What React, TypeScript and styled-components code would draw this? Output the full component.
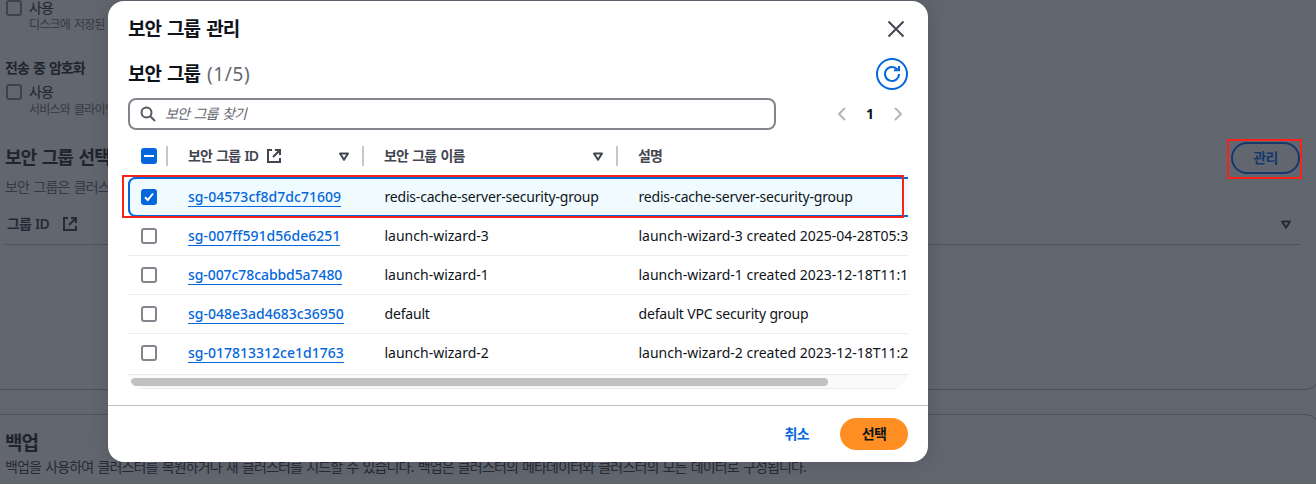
import React from "react";
import styled, { createGlobalStyle } from "styled-components";

const Global = createGlobalStyle`
  * { box-sizing: border-box; }
  body { margin: 0; background: #62666f; overflow: hidden; }
  body, button, input { font-family: "Noto Sans", "Noto Sans CJK KR", sans-serif; }
  h1, h2, h3, p { margin: 0; }
  button { cursor: pointer; margin: 0; padding: 0; }
`;

const Page = styled.div`
  position: relative;
  width: 1316px;
  height: 484px;
  overflow: hidden;
  background: #62666f;
  color: #1f242e;
`;

const Card = styled.section<{ $height: number; $first?: boolean }>`
  height: ${(p) => p.$height}px;
  width: 1341px;
  margin: 0 0 24px -20px;
  padding: ${(p) => (p.$first ? "0 20px 0 24px" : "16px 20px 0 24px")};
  border: 1px solid #4c515b;
  border-top-width: ${(p) => (p.$first ? 0 : 1)}px;
  border-radius: ${(p) => (p.$first ? "0 0 16px 16px" : "16px")};
`;

const Option = styled.div`
  display: flex;
  gap: 7px;
  height: 33px;
  padding-left: 1px;
`;

const OptionText = styled.div`
  display: flex;
  flex-direction: column;
`;

const Txt = styled.span<{ $size?: number; $w?: number; $ls?: number; $ws?: number; $lh?: number; $c?: string }>`
  display: block;
  white-space: nowrap;
  font-size: ${(p) => p.$size ?? 14}px;
  font-weight: ${(p) => p.$w ?? 400};
  letter-spacing: ${(p) => p.$ls ?? 0}px;
  word-spacing: ${(p) => p.$ws ?? 0}px;
  line-height: ${(p) => p.$lh ?? 20}px;
  color: ${(p) => p.$c ?? "inherit"};
`;

const Box = styled.span<{ $tone: "dim" | "plain" | "on" }>`
  display: flex;
  flex: none;
  align-items: center;
  justify-content: center;
  width: 16px;
  height: 16px;
  border-radius: 3px;
  border: 2px solid ${(p) => ({ dim: "#3e424c", plain: "#84848d", on: "#0567dc" })[p.$tone]};
  background: ${(p) => (p.$tone === "on" ? "#0567dc" : "transparent")};
`;

const FieldLabel = styled.div`
  margin: 25px 0 6px;
  height: 20px;
`;

const SectionHead = styled.div`
  display: flex;
  justify-content: space-between;
  height: 32px;
  margin-top: 25px;
`;

const ManageButton = styled.button`
  width: 69px;
  height: 32px;
  border: 2px solid #16396b;
  border-radius: 16px;
  background: transparent;
  color: #16396b;
  display: flex;
  align-items: center;
  justify-content: center;
`;

const GroupHead = styled.div`
  display: flex;
  align-items: center;
  height: 41px;
  margin-top: 4px;
  padding: 0 8px 0 2px;
  border-bottom: 1px solid #4c515b;
  color: #262b36;
  > svg:last-child { margin-left: auto; }
`;

const Modal = styled.div`
  position: absolute;
  left: 108px;
  top: 1px;
  width: 820px;
  height: 461px;
  border-radius: 16px;
  background: #fff;
  color: #0f141a;
  box-shadow: 0 0 20px 1px rgba(0, 7, 22, 0.14);
  display: flex;
  flex-direction: column;
`;

const ModalBody = styled.div`
  flex: 1;
  padding: 0 20px;
`;

const Bar = styled.div<{ $h: number; $top?: number; $pr?: number }>`
  display: flex;
  align-items: center;
  justify-content: space-between;
  height: ${(p) => p.$h}px;
  margin-top: ${(p) => p.$top ?? 0}px;
  padding-right: ${(p) => p.$pr ?? 0}px;
`;

const IconButton = styled.button<{ $ring?: boolean }>`
  display: flex;
  align-items: center;
  justify-content: center;
  width: ${(p) => (p.$ring ? 32 : 24)}px;
  height: ${(p) => (p.$ring ? 32 : 24)}px;
  border: ${(p) => (p.$ring ? "2px solid #0567dc" : "0")};
  border-radius: 50%;
  background: transparent;
`;

const TitleLine = styled.div`
  display: flex;
  gap: 7px;
`;

const Search = styled.div`
  display: flex;
  align-items: center;
  gap: 9px;
  width: 648px;
  height: 32px;
  padding-left: 10px;
  border: 2px solid #84848d;
  border-radius: 8px;
  font-style: italic;
`;

const Pager = styled.div`
  display: flex;
  align-items: center;
  gap: 16px;
`;

const Table = styled.div`
  margin-top: 8px;
  overflow: hidden;
  border-radius: 0 0 16px 16px;
`;

const Row = styled.div<{ $kind: "head" | "selected" | "plain" | "last" }>`
  display: grid;
  grid-template-columns: 40px 196px 254px 310px;
  align-items: center;
  width: 800px;
  height: ${(p) => ({ head: 39, selected: 40, plain: 39, last: 40 })[p.$kind]}px;
  ${(p) =>
    p.$kind === "selected" &&
    `background: #f0fbff; box-shadow: inset 0 2px #0567dc, inset 0 -2px #0567dc, inset 2px 0 #0567dc; border-radius: 8px 0 0 8px;`}
  ${(p) => p.$kind === "plain" && "border-bottom: 1px solid #ebebf0;"}
  ${(p) => p.$kind === "last" && "padding-bottom: 2px;"}
`;

const HeadCell = styled.div<{ $line?: boolean; $pad?: number }>`
  display: flex;
  align-items: center;
  height: 20px;
  margin-top: -3px;
  padding: 0 12px 0 ${(p) => p.$pad ?? 20}px;
  border-right: ${(p) => (p.$line ? "2px solid #c6c6cd" : "0")};
  color: #424650;
  > svg:last-child { margin-left: auto; }
`;

const Cell = styled.div<{ $pad?: number }>`
  display: flex;
  align-items: center;
  min-width: 0;
  padding-left: ${(p) => p.$pad ?? 20.5}px;
`;

const Link = styled.a`
  display: block;
  height: 20px;
  border-bottom: 1px solid #0567dc;
  color: #0567dc;
`;

const ScrollTrack = styled.div`
  height: 15px;
  padding: 3px 0 0 3px;
  border-top: 1px solid #e8e8e8;
  border-bottom: 1px solid #ededed;
  background: #fafafa;
`;

const ScrollThumb = styled.div`
  width: 697px;
  height: 8px;
  border-radius: 4px;
  background: #c1c1c1;
`;

const Footer = styled.div`
  display: flex;
  align-items: center;
  justify-content: flex-end;
  gap: 31px;
  height: 57px;
  padding-right: 20px;
  border-top: 1px solid #c0c0c4;
`;

const TextButton = styled.button`
  border: 0;
  background: transparent;
  color: #0567dc;
`;

const PrimaryButton = styled.button`
  width: 68px;
  height: 32px;
  border: 0;
  border-radius: 16px;
  background: #ff8f22;
  color: #0f141a;
  display: flex;
  align-items: center;
  justify-content: center;
`;

const Highlight = styled.div<{ $x: number; $y: number; $w: number; $h: number }>`
  position: absolute;
  left: ${(p) => p.$x}px;
  top: ${(p) => p.$y}px;
  width: ${(p) => p.$w}px;
  height: ${(p) => p.$h}px;
  border: 2px solid #f9221b;
  pointer-events: none;
`;

const Push = styled.span<{ $l: number }>`
  display: flex;
  margin-left: ${(p) => p.$l}px;
`;

const External = () => (
  <svg width="16" height="16" viewBox="0 0 16 16" fill="none" stroke="currentColor" strokeWidth="2">
    <path d="M9 2h5v5M14 2L7 9M14 10v4H2V2h4" />
  </svg>
);

const Sort = () => (
  <svg width="12" height="12" viewBox="0 0 12 12" fill="none" stroke="currentColor" strokeWidth="2" strokeLinejoin="round">
    <path d="M2 3.5h8L6 9.8z" />
  </svg>
);

const Chevron = ({ right }: { right?: boolean }) => (
  <svg width="16" height="16" viewBox="0 0 16 16" fill="none" stroke="#b4b4bb" strokeWidth="2">
    <path d={right ? "M5 2l6 6-6 6" : "M11 2L5 8l6 6"} />
  </svg>
);

const rows = [
  { id: "sg-04573cf8d7dc71609", idLs: 0.05, name: "redis-cache-server-security-group", desc: "redis-cache-server-security-group", ls: -0.2 },
  { id: "sg-007ff591d56de6251", idLs: 0.05, name: "launch-wizard-3", desc: "launch-wizard-3 created 2025-04-28T05:3", ls: 0 },
  { id: "sg-007c78cabbd5a7480", idLs: -0.08, name: "launch-wizard-1", desc: "launch-wizard-1 created 2023-12-18T11:1", ls: 0 },
  { id: "sg-048e3ad4683c36950", idLs: 0, name: "default", desc: "default VPC security group", ls: -0.18 },
  { id: "sg-017813312ce1d1763", idLs: 0, name: "launch-wizard-2", desc: "launch-wizard-2 created 2023-12-18T11:2", ls: 0 },
];

export default function App() {
  return (
    <Page>
      <Global />
      <Card $first $height={390}>
        <Option>
          <Box $tone="dim" />
          <OptionText>
            <Txt $lh={16} $ls={-0.8}>사용</Txt>
            <Txt $size={12} $ls={-0.75} $ws={1.5} $lh={18} $c="#343944">디스크에 저장된</Txt>
          </OptionText>
        </Option>
        <FieldLabel><Txt $w={700} $ls={-1} $ws={1.5}>전송 중 암호화</Txt></FieldLabel>
        <Option>
          <Box $tone="dim" />
          <OptionText>
            <Txt $lh={16} $ls={-0.8}>사용</Txt>
            <Txt $size={12} $ls={-0.75} $ws={1.5} $lh={19} $c="#343944">서비스와 클라이언트</Txt>
          </OptionText>
        </Option>
        <SectionHead>
          <Txt as="h2" $size={18} $w={700} $ls={-1} $ws={2} $lh={30}>보안 그룹 선택</Txt>
          <ManageButton><Txt $w={600} $ls={-0.6}>관리</Txt></ManageButton>
        </SectionHead>
        <Txt as="p" $ls={-0.85} $ws={1.5} $lh={26} $c="#343944">보안 그룹은 클러스터에</Txt>
        <GroupHead>
          <Txt $w={600} $ls={-0.8} $ws={1}>그룹 ID</Txt>
          <Push $l={13}><External /></Push>
          <Sort />
        </GroupHead>
      </Card>
      <Card $height={100}>
        <Txt as="h2" $size={19} $w={700} $ls={-1} $lh={24}>백업</Txt>
        <Txt as="p" $ls={-0.85} $ws={1.3} $lh={24} $c="#262b36">
          백업을 사용하여 클러스터를 복원하거나 새 클러스터를 시드할 수 있습니다. 백업은 클러스터의 메타데이터와 클러스터의 모든 데이터로 구성됩니다.
        </Txt>
      </Card>

      <Modal role="dialog">
        <ModalBody>
          <Bar $h={26} $top={15}>
            <Txt as="h1" $size={19} $w={700} $ls={-1} $ws={2.2} $lh={24}>보안 그룹 관리</Txt>
            <IconButton aria-label="닫기">
              <svg width="18" height="18" viewBox="0 0 18 18" fill="none" stroke="#424650" strokeWidth="2">
                <path d="M1.5 1.5l15 15M16.5 1.5l-15 15" />
              </svg>
            </IconButton>
          </Bar>
          <Bar $h={32} $top={16}>
            <TitleLine>
              <Txt as="h2" $size={19} $w={700} $ls={-1} $ws={2.2} $lh={24}>보안 그룹</Txt>
              <Txt $size={19} $ls={0.6} $lh={24} $c="#656871">(1/5)</Txt>
            </TitleLine>
            <IconButton $ring aria-label="새로 고침">
              <svg width="18" height="18" viewBox="0 0 18 18" fill="none" stroke="#0567dc" strokeWidth="2">
                <path d="M16 9a7 7 0 1 1-1.6-4.5" />
                <path d="M16 1v4.2h-5" />
              </svg>
            </IconButton>
          </Bar>
          <Bar $h={32} $top={8} $pr={2}>
            <Search>
              <svg width="16" height="16" viewBox="0 0 16 16" fill="none" stroke="#555963" strokeWidth="2">
                <circle cx="6.5" cy="6.5" r="5" />
                <path d="M10 10l5 5" />
              </svg>
              <Txt $ls={-0.9} $ws={1.8} $c="#656871">보안 그룹 찾기</Txt>
            </Search>
            <Pager>
              <Chevron />
              <Txt $w={700}>1</Txt>
              <Chevron right />
            </Pager>
          </Bar>
          <Table>
            <Row $kind="head">
              <HeadCell $line $pad={13}>
                <Box $tone="on">
                  <svg width="12" height="12" viewBox="0 0 12 12" stroke="#fff" strokeWidth="2"><path d="M1 6h10" /></svg>
                </Box>
              </HeadCell>
              <HeadCell $line>
                <Txt $w={600} $ls={-0.9} $ws={1.5}>보안 그룹 ID</Txt>
                <Push $l={8}><External /></Push>
                <Sort />
              </HeadCell>
              <HeadCell $line>
                <Txt $w={600} $ls={-0.9} $ws={1.5}>보안 그룹 이름</Txt>
                <Sort />
              </HeadCell>
              <HeadCell><Txt $w={600} $ls={-0.9}>설명</Txt></HeadCell>
            </Row>
            {rows.map((r, i) => (
              <Row key={r.id} $kind={i === 0 ? "selected" : i === 4 ? "last" : "plain"}>
                <Cell $pad={13}>
                  <Box $tone={i === 0 ? "on" : "plain"}>
                    {i === 0 && (
                      <svg width="12" height="12" viewBox="0 0 12 12" fill="none" stroke="#fff" strokeWidth="2"><path d="M2 6.2l2.8 2.8L10 2.5" /></svg>
                    )}
                  </Box>
                </Cell>
                <Cell $pad={20}><Link><Txt $w={500} $ls={r.idLs}>{r.id}</Txt></Link></Cell>
                <Cell><Txt $ls={r.ls}>{r.name}</Txt></Cell>
                <Cell><Txt $ls={r.ls}>{r.desc}</Txt></Cell>
              </Row>
            ))}
            <ScrollTrack><ScrollThumb /></ScrollTrack>
          </Table>
        </ModalBody>
        <Footer>
          <TextButton><Txt $w={600} $ls={-0.6}>취소</Txt></TextButton>
          <PrimaryButton><Txt $w={700} $ls={-0.6}>선택</Txt></PrimaryButton>
        </Footer>
      </Modal>

      <Highlight $x={122} $y={175} $w={782} $h={43} />
      <Highlight $x={1227} $y={139} $w={75} $h={40} />
    </Page>
  );
}
